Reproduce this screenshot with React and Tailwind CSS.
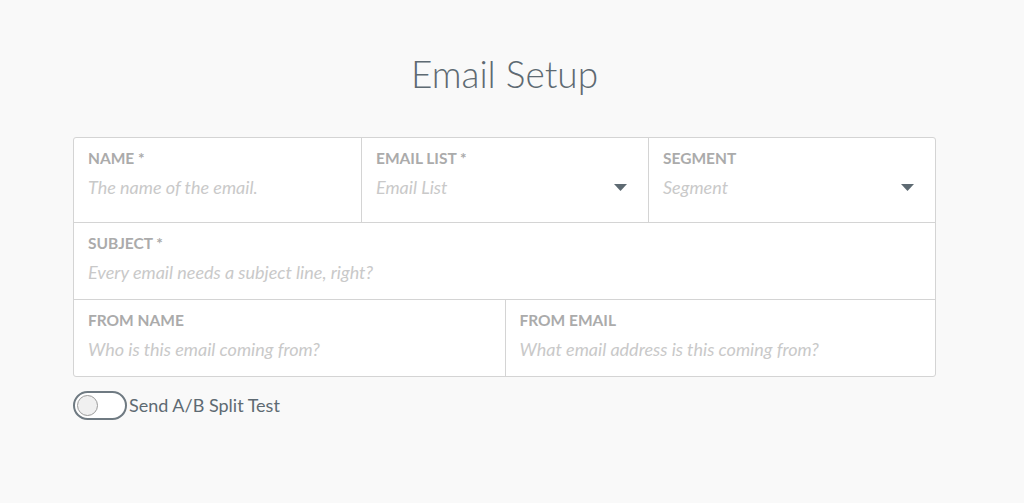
import { useState } from "react";

function Caret() {
  return (
    <svg width="13" height="7" viewBox="0 0 13 7" className="shrink-0">
      <path d="M0 0h13L6.5 7z" fill="#5e6a72" />
    </svg>
  );
}

function Field({ label, placeholder, select, className = "" }) {
  return (
    <div className={`flex flex-col px-[14px] pt-[11px] ${className}`}>
      <span className="text-[15.5px] font-bold text-[#ababab] leading-[18px]">{label}</span>
      <div className="flex items-center justify-between mt-[9px] pr-[7px]">
        <span className="text-[18px] italic text-[#c9c9c9] leading-[22px]">{placeholder}</span>
        {select && <Caret />}
      </div>
    </div>
  );
}

export default function App() {
  const [on, setOn] = useState(false);

  return (
    <div className="min-h-[503px] bg-[#f9f9f9] font-['Lato','Noto_Sans',sans-serif] pt-[50px]">
      <div className="mx-[73px] w-[863px]">
        <h1 className="text-center text-[37px] font-light text-[#5e6a72] leading-[48px]">Email Setup</h1>

        <div className="mt-[39px] bg-white border border-[#d4d4d4] rounded-[3px]">
          <div className="grid grid-cols-3 h-[85px] border-b border-[#d4d4d4]">
            <Field label="NAME *" placeholder="The name of the email." />
            <Field label="EMAIL LIST *" placeholder="Email List" select className="border-l border-[#d4d4d4]" />
            <Field label="SEGMENT" placeholder="Segment" select className="border-l border-[#d4d4d4]" />
          </div>
          <div className="h-[77px] border-b border-[#d4d4d4]">
            <Field label="SUBJECT *" placeholder="Every email needs a subject line, right?" />
          </div>
          <div className="grid grid-cols-2 h-[76px]">
            <Field label="FROM NAME" placeholder="Who is this email coming from?" />
            <Field label="FROM EMAIL" placeholder="What email address is this coming from?" className="border-l border-[#d4d4d4]" />
          </div>
        </div>

        <div className="flex items-center mt-[14px]">
          <button
            onClick={() => setOn(!on)}
            className={`w-[54px] h-[29px] rounded-full border-2 border-[#6f7a82] flex items-center px-[2px] ${on ? "bg-[#5e6a72] justify-end" : "bg-white justify-start"}`}
          >
            <span className="w-[21px] h-[21px] rounded-full border border-[#9a9a9a] bg-[#f0f0f0]" />
          </button>
          <span className="ml-[2px] text-[18px] text-[#5e6a72]">Send A/B Split Test</span>
        </div>
      </div>
    </div>
  );
}
